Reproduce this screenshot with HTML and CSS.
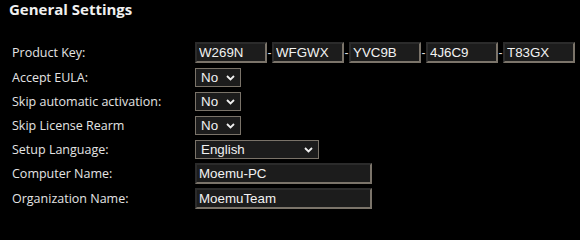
FILE: index.html
```html
<!DOCTYPE html>
<html>
<head>
<meta charset="utf-8">
<link rel="stylesheet" href="styles.css">
</head>
<body>
<div class="page">
  <h1 class="title">General Settings</h1>
  <div class="form">
    <div class="row row-key">
      <label class="label">Product Key:</label>
      <div class="key">
        <input class="field key-part" type="text" value="W269N"><span class="dash">-</span><input class="field key-part" type="text" value="WFGWX"><span class="dash">-</span><input class="field key-part" type="text" value="YVC9B"><span class="dash">-</span><input class="field key-part" type="text" value="4J6C9"><span class="dash">-</span><input class="field key-part" type="text" value="T83GX">
      </div>
    </div>
    <div class="row row-sel">
      <label class="label">Accept EULA:</label>
      <select class="sel sel-small"><option>No</option><option>Yes</option></select>
    </div>
    <div class="row row-sel">
      <label class="label">Skip automatic activation:</label>
      <select class="sel sel-small"><option>No</option><option>Yes</option></select>
    </div>
    <div class="row row-sel">
      <label class="label">Skip License Rearm</label>
      <select class="sel sel-small"><option>No</option><option>Yes</option></select>
    </div>
    <div class="row row-sel">
      <label class="label">Setup Language:</label>
      <select class="sel sel-lang"><option>English</option></select>
    </div>
    <div class="row row-text">
      <label class="label">Computer Name:</label>
      <input class="field field-wide" type="text" value="Moemu-PC">
    </div>
    <div class="row row-text">
      <label class="label">Organization Name:</label>
      <input class="field field-wide" type="text" value="MoemuTeam">
    </div>
  </div>
</div>
</body>
</html>
```

FILE: styles.css
```css
html, body {
  margin: 0;
  padding: 0;
  background: #000;
}
.page {
  width: 580px;
  height: 227px;
  background: #000;
  color: #e4e4e4;
  font-family: "Open Sans", "Noto Sans", sans-serif;
  overflow: hidden;
}
.title {
  margin: 0;
  padding: 0 0 0 9px;
  font-size: 15px;
  line-height: 18px;
  font-weight: 700;
  color: #f0f0f0;
  height: 18px;
}
.form {
  display: flex;
  flex-direction: column;
  padding-left: 12px;
  margin-top: 24px;
}
.row {
  display: flex;
  align-items: center;
}
.row-sel {
  height: 19px;
  margin-top: 5px;
}
.row-key {
  height: 21px;
}
.row-text {
  height: 21px;
  margin-top: 4px;
}
.row-sel + .row-text {
  margin-top: 4px;
}
.label {
  width: 183px;
  font-size: 12.5px;
  line-height: 16px;
  color: #e4e4e4;
}
.key {
  display: flex;
  align-items: center;
}
.dash {
  width: 5px;
  text-align: center;
  font-family: "Liberation Sans", Arial, sans-serif;
  font-size: 12px;
  color: #ddd;
}
.field {
  box-sizing: border-box;
  height: 21px;
  margin: 0;
  padding: 0 2px;
  background: #1c1c1c;
  color: #f2f2f2;
  font-family: "Liberation Sans", Arial, sans-serif;
  font-size: 13.333px;
  border-style: solid;
  border-width: 2px;
  border-color: #2b2b2b #7b746a #7b746a #2b2b2b;
  outline: none;
}
.key-part {
  width: 72px;
}
.field-wide {
  width: 177px;
}
.sel {
  box-sizing: border-box;
  height: 19px;
  margin: 0;
  padding: 0 0 0 5px;
  appearance: none;
  -webkit-appearance: none;
  background-color: #1c1c1c;
  background-image: url("data:image/svg+xml,%3Csvg xmlns='http://www.w3.org/2000/svg' width='9' height='6' viewBox='0 0 9 6'%3E%3Cpath d='M1 1 L4.5 4.5 L8 1' fill='none' stroke='%23f0f0f0' stroke-width='1.8'/%3E%3C/svg%3E");
  background-repeat: no-repeat;
  background-position: right 5px center;
  color: #f2f2f2;
  font-family: "Liberation Sans", Arial, sans-serif;
  font-size: 13.333px;
  line-height: 17px;
  border: 1px solid #7a7369;
  border-radius: 0;
  outline: none;
}
.sel-small {
  width: 46px;
}
.sel-lang {
  width: 124px;
}
```
